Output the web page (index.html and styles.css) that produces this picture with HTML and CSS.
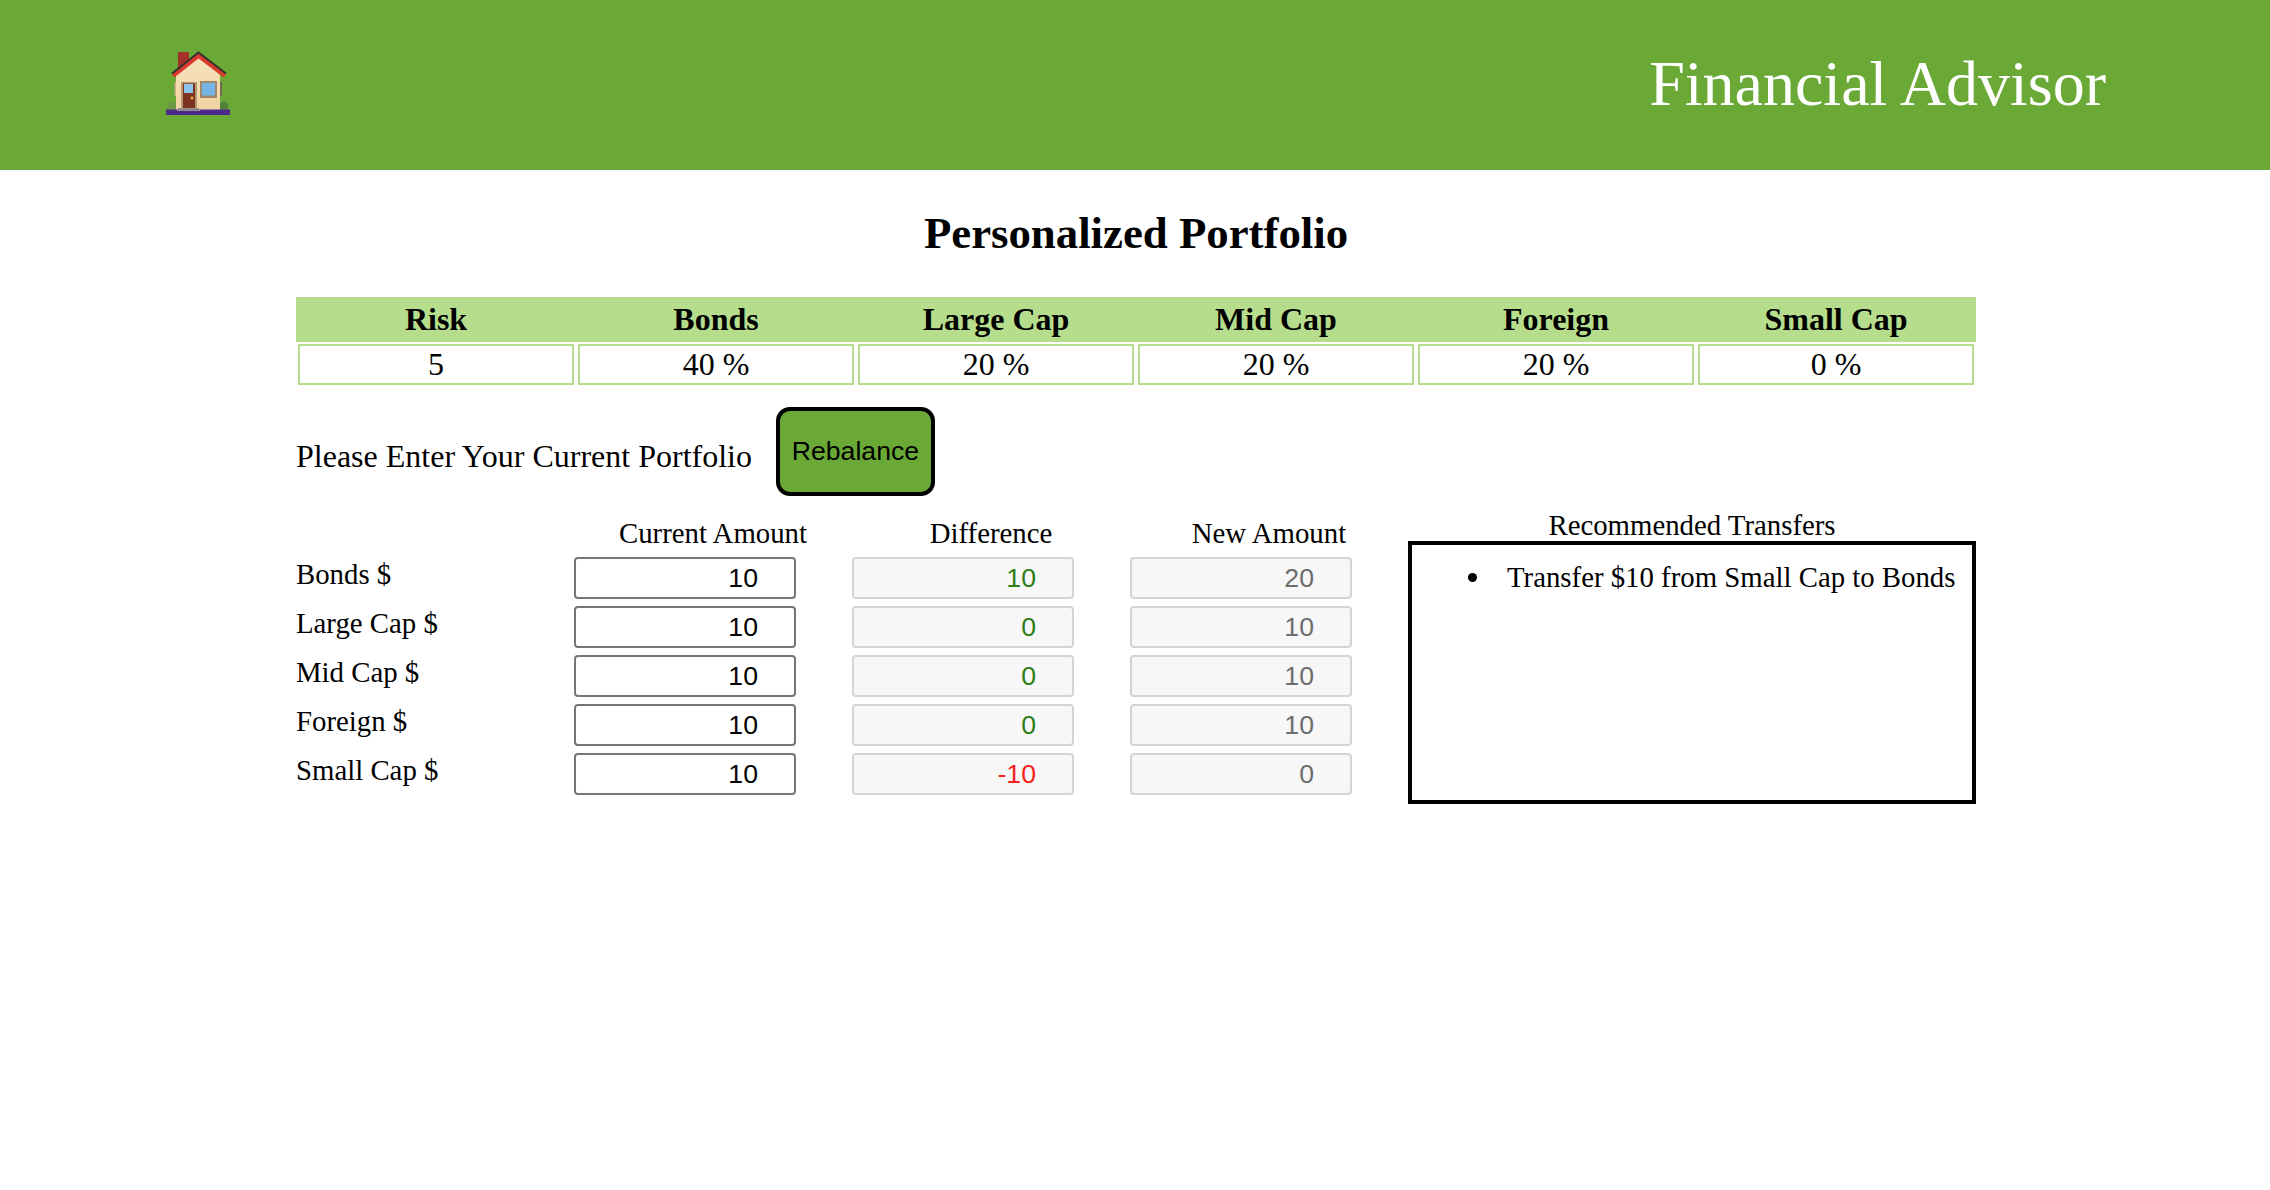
FILE: index.html
```html
<!DOCTYPE html>
<html lang="en">
<head>
  <meta charset="UTF-8">
  <title>Financial Advisor</title>
  <link rel="stylesheet" href="styles.css">
</head>
<body>
  <header class="topbar">
    <svg class="home-icon" width="64" height="64" viewBox="0 0 64 64">
      <defs>
        <linearGradient id="wall" x1="0" y1="0" x2="0" y2="1">
          <stop offset="0" stop-color="#f7e3bd"/>
          <stop offset="1" stop-color="#f0d3a2"/>
        </linearGradient>
      </defs>
      <rect x="12" y="1" width="11" height="18" fill="#a5322a"/>
      <rect x="8.5" y="31" width="2" height="14" fill="#c9b08c"/>
      <rect x="54" y="31" width="2" height="14" fill="#6f6a50"/>
      <circle cx="6" cy="55" r="4.5" fill="#6f9a45"/>
      <circle cx="58" cy="55" r="4.5" fill="#55803a"/>
      <path d="M10 24 L32.5 6 L54 24 V60 H10 Z" fill="url(#wall)"/>
      <path d="M7 25 L32.5 5 L59 25" fill="none" stroke="#dc3a2e" stroke-width="4"/>
      <path d="M6 22.5 L32.5 1.5 L60 22.5" fill="none" stroke="#33302e" stroke-width="2"/>
      <rect x="15" y="31" width="16" height="27" fill="#b59673"/>
      <rect x="17" y="32.5" width="12" height="25" fill="#7c3420"/>
      <rect x="18" y="33" width="9" height="9" fill="#8cc4ea"/>
      <circle cx="26" cy="47" r="1.4" fill="#f5b335"/>
      <rect x="34" y="30" width="17" height="17" fill="#a48668"/>
      <rect x="36" y="32" width="13" height="12.5" fill="#74b5e8"/>
      <rect x="12" y="57" width="21" height="2" fill="#a09a8e"/>
      <rect x="0" y="58.500" width="64" height="5.500" fill="#4b2a8c"/>
      <rect x="11" y="58.500" width="23" height="1.500" fill="#96918a"/>
    </svg>
    <h1 class="brand">Financial Advisor</h1>
  </header>

  <main class="page">
    <h2 class="page-title">Personalized Portfolio</h2>

    <div class="alloc">
      <div class="alloc-head">Risk</div>
      <div class="alloc-head">Bonds</div>
      <div class="alloc-head">Large Cap</div>
      <div class="alloc-head">Mid Cap</div>
      <div class="alloc-head">Foreign</div>
      <div class="alloc-head">Small Cap</div>
      <div class="alloc-cell">5</div>
      <div class="alloc-cell">40 %</div>
      <div class="alloc-cell">20 %</div>
      <div class="alloc-cell">20 %</div>
      <div class="alloc-cell">20 %</div>
      <div class="alloc-cell">0 %</div>
    </div>

    <div class="prompt">
      <span class="prompt-text">Please Enter Your Current Portfolio</span>
      <button class="rebalance">Rebalance</button>
    </div>

    <div class="workspace">
      <div class="amounts">
        <span></span>
        <span class="col-head">Current Amount</span>
        <span class="col-head">Difference</span>
        <span class="col-head">New Amount</span>

        <label class="row-label">Bonds $</label>
        <input class="amount" value="10">
        <input class="amount locked up" value="10" disabled>
        <input class="amount locked" value="20" disabled>

        <label class="row-label">Large Cap $</label>
        <input class="amount" value="10">
        <input class="amount locked up" value="0" disabled>
        <input class="amount locked" value="10" disabled>

        <label class="row-label">Mid Cap $</label>
        <input class="amount" value="10">
        <input class="amount locked up" value="0" disabled>
        <input class="amount locked" value="10" disabled>

        <label class="row-label">Foreign $</label>
        <input class="amount" value="10">
        <input class="amount locked up" value="0" disabled>
        <input class="amount locked" value="10" disabled>

        <label class="row-label">Small Cap $</label>
        <input class="amount" value="10">
        <input class="amount locked down" value="-10" disabled>
        <input class="amount locked" value="0" disabled>
      </div>

      <section class="transfers">
        <div class="transfers-title">Recommended Transfers</div>
        <ul class="transfers-box">
          <li class="transfer">Transfer $10 from Small Cap to Bonds</li>
        </ul>
      </section>
    </div>
  </main>
</body>
</html>
```

FILE: styles.css
```css
* { box-sizing: border-box; }
body {
  margin: 0;
  background: #fff;
  color: #000;
  font-family: "Liberation Serif", "Times New Roman", serif;
}
.topbar {
  height: 170px;
  background: #6aa936;
  display: flex;
  align-items: center;
  justify-content: space-between;
  padding: 0 164px 0 166px;
}
.home-icon { margin-top: -4px; }
.brand {
  margin: -2px 0 0;
  color: #fff;
  font-size: 64px;
  font-weight: normal;
}
.page {
  width: 1680px;
  margin-left: 296px;
}
.page-title {
  margin: 38px 0 0;
  height: 89px;
  line-height: 50px;
  text-align: center;
  font-size: 44.8px;
}
.alloc {
  display: grid;
  grid-template-columns: repeat(6, 1fr);
  row-gap: 2px;
}
.alloc-head {
  height: 45px;
  line-height: 45px;
  background: #b5dd8c;
  text-align: center;
  font-size: 32px;
  font-weight: bold;
}
.alloc-cell {
  height: 41px;
  line-height: 37px;
  margin: 0 2px;
  border: 2px solid #b5dd8c;
  text-align: center;
  font-size: 32px;
}
.prompt {
  display: flex;
  align-items: center;
  gap: 24px;
  margin-top: 22px;
}
.prompt-text {
  font-size: 32px;
  margin-top: 9px;
}
.rebalance {
  width: 159px;
  height: 89px;
  padding: 0;
  background: #6aa936;
  border: 4px solid #000;
  border-radius: 14px;
  color: #000;
  font-family: "Liberation Sans", Arial, sans-serif;
  font-size: 26.67px;
}
.workspace {
  display: flex;
  margin-top: 12px;
}
.amounts {
  display: grid;
  grid-template-columns: repeat(4, 278px);
  grid-template-rows: 42px repeat(5, 42px);
  row-gap: 7px;
}
.col-head {
  padding-top: 8px;
  text-align: center;
  font-size: 28.8px;
  line-height: 34px;
}
.row-label {
  font-size: 28.8px;
  line-height: 34px;
}
.amount {
  width: 222px;
  height: 42px;
  padding: 0 36px 0 0;
  background: #fff;
  border: 2px solid #767676;
  border-radius: 4px;
  color: #000;
  text-align: right;
  font-family: "Liberation Sans", Arial, sans-serif;
  font-size: 26.67px;
}
.locked {
  background: #f7f7f7;
  border-color: #d4d4d4;
  color: #6d6d6d;
}
.up { color: #2f7d14; }
.down { color: #f5221b; }
.transfers {
  flex: 1;
}
.transfers-title {
  height: 33px;
  text-align: center;
  font-size: 28.8px;
  line-height: 34px;
}
.transfers-box {
  height: 263px;
  margin: 0;
  padding: 16px 0 0 56px;
  border: 4px solid #000;
  list-style: none;
  font-size: 28.8px;
}
.transfer {
  display: flex;
  align-items: center;
  gap: 30px;
}
.transfer::before {
  content: "";
  width: 9px;
  height: 9px;
  border-radius: 50%;
  background: #000;
}
```
